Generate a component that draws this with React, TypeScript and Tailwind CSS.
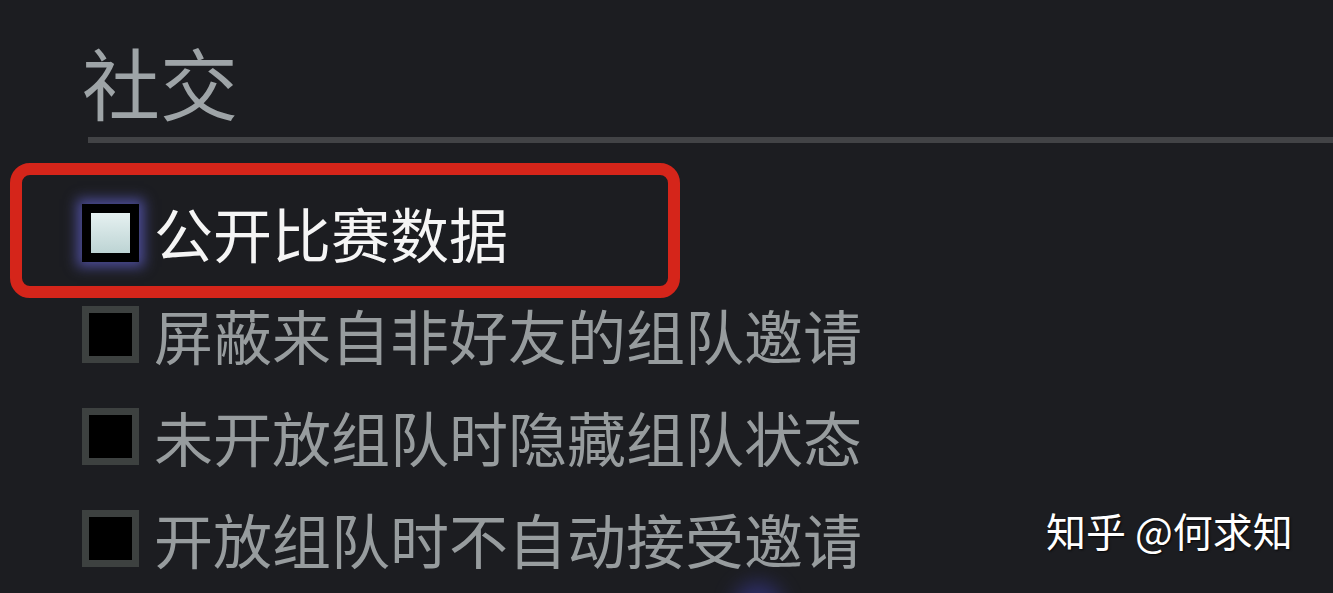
const options = [
  "屏蔽来自非好友的组队邀请",
  "未开放组队时隐藏组队状态",
  "开放组队时不自动接受邀请",
];

const EmptyBox = () => (
  <div className="h-[57px] w-[57px] shrink-0 border-[7px] border-[#3d4140] bg-black" />
);

export default function App() {
  return (
    <div className="relative h-[593px] w-[1333px] overflow-hidden bg-[#1c1d21] font-['Noto_Sans_CJK_SC',sans-serif]">
      <div className="flex flex-col">
        {/* section title */}
        <div className="pl-[82px] pt-[42px]">
          <h2 className="h-[78px] text-[78px] leading-none text-[#9ea4a7]">社交</h2>
        </div>
        <div className="ml-[88px] mt-[17px] h-[6px] bg-[#424346]" />

        {/* highlighted option */}
        <div className="ml-[10px] mt-[20px] flex h-[135px] w-[670px] items-center rounded-[20px] border-[12px] border-[#d5251a] pl-[60px] pt-[4px]">
          <div className="flex items-center gap-[15px]">
            <div className="h-[58px] w-[57px] shrink-0 bg-black p-[9px] shadow-[0_0_12px_5px_rgba(88,88,180,0.8)]">
              <div className="h-full w-full bg-gradient-to-b from-[#e6f1f1] to-[#bdd4d4]" />
            </div>
            <span className="text-[59px] leading-none text-[#f5f5f5]">公开比赛数据</span>
          </div>
        </div>

        <div className="mt-[8px] flex flex-col gap-[45px] pl-[82px]">
          {options.map((label) => (
            <div key={label} className="flex h-[57px] items-center gap-[15px]">
              <EmptyBox />
              <span className="text-[59px] leading-none text-[#979c9e]">{label}</span>
            </div>
          ))}
        </div>
      </div>

      {/* glow peeking in from below */}
      <div className="absolute left-[733px] top-[582px] h-[50px] w-[50px] rounded-full bg-[#33337a] opacity-80 blur-[10px]" />

      {/* watermark */}
      <div className="absolute left-[1046px] top-[510px] text-[40px] leading-none text-white [text-shadow:1px_1px_2px_rgba(0,0,0,0.8)]">
        知乎 @何求知
      </div>
    </div>
  );
}
